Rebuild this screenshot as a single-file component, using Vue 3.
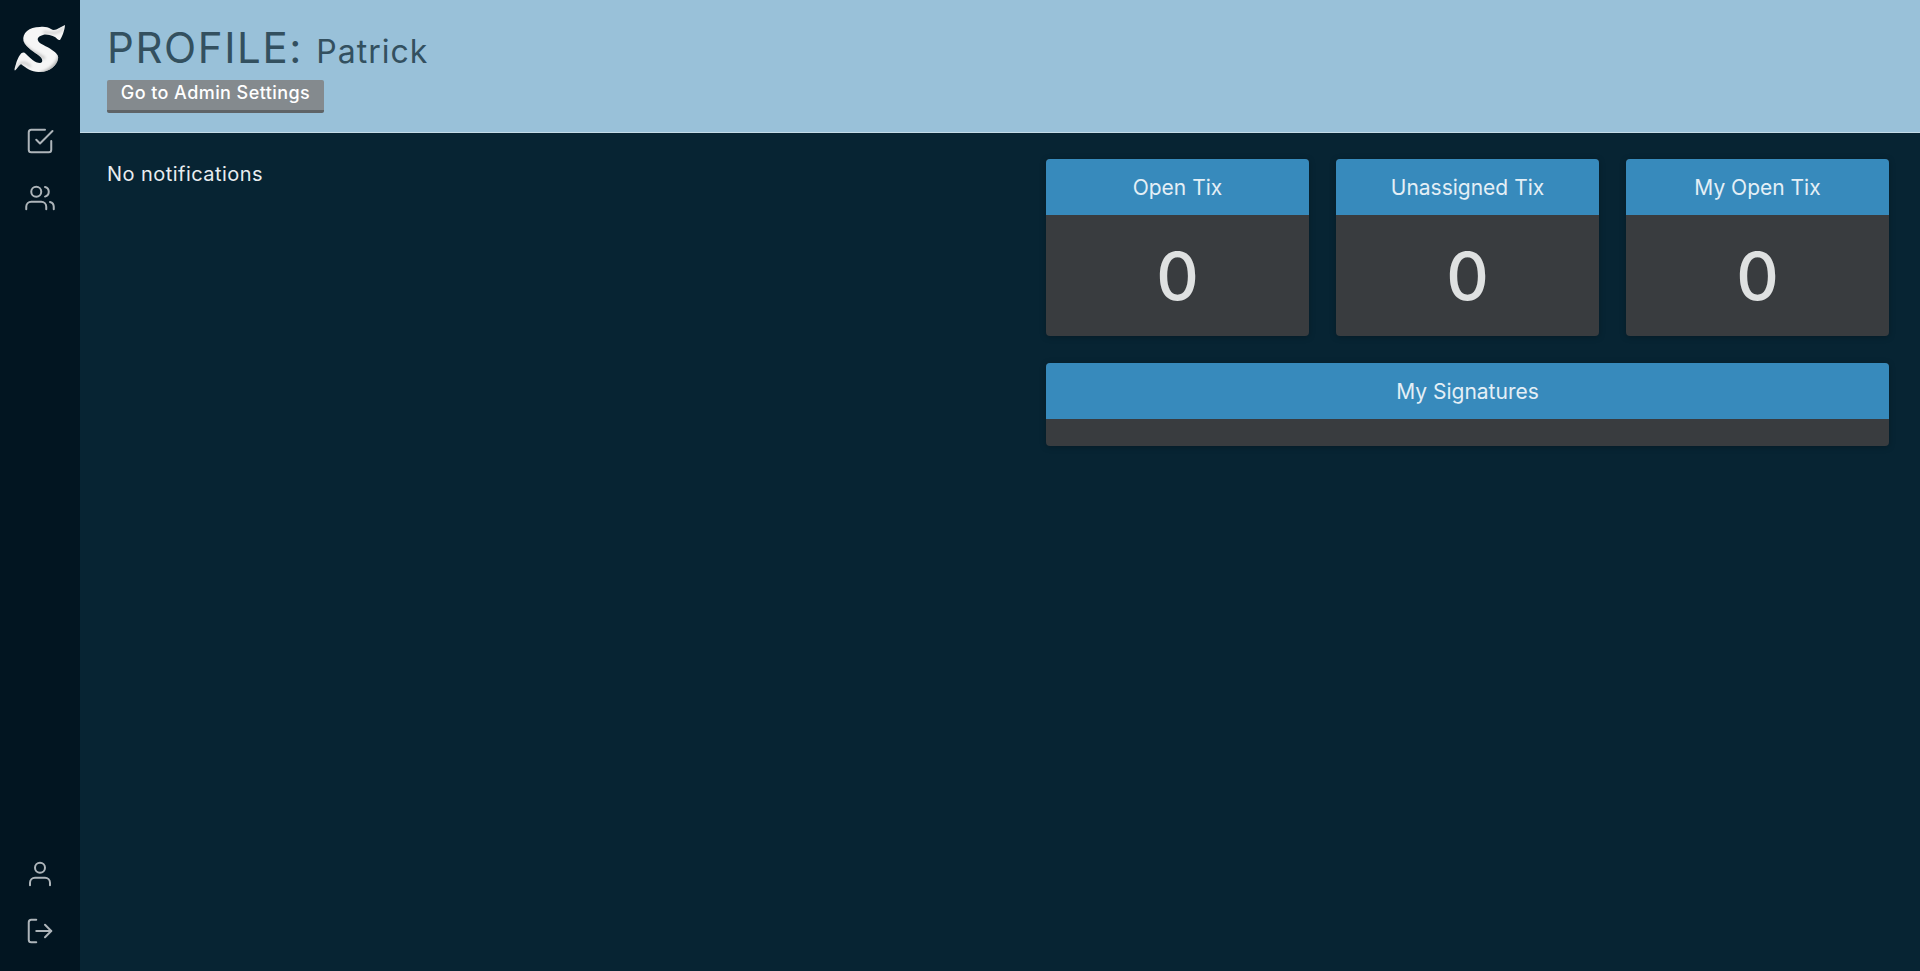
<script setup>
const stats = [
  { title: 'Open Tix', value: 0 },
  { title: 'Unassigned Tix', value: 0 },
  { title: 'My Open Tix', value: 0 },
]
const logoPath = 'M65 25C64.500 31 62 37 60 40C58 40.500 57 38.500 55 37C51 35 46 34 43 35C39 36 37 38 38 40.500C39 44 47 46 52 50C56 53 59 55 58 59C57 65 50 72 40 72C32 72.500 26 68 21 64C19 65 17 69 15 70.500C14 70 15 67 16 64C17 60 19 56 20 55C22 52 24 52 26 54C30 58 35 63 40 63C43 63 43 59 40 56.500C35 52 26 48 23.500 41C22 33 29 27 40 27C44 26.500 48 27 51 29C55 32 60 27 65 25Z'
</script>

<template>
  <div class="app">
    <aside class="sidebar">
      <div class="logo">
        <svg width="80" height="80" viewBox="0 0 80 80">
          <defs>
            <clipPath id="sclip"><path :d="logoPath" /></clipPath>
            <filter id="sblur" x="-20%" y="-20%" width="140%" height="140%"><feGaussianBlur stdDeviation="1.600" /></filter>
          </defs>
          <path fill="#f6f6f6" :d="logoPath" />
          <g clip-path="url(#sclip)" filter="url(#sblur)" fill="none" stroke-linecap="round">
            <path stroke="#a9a9a9" stroke-width="3" d="M60 50C61 60 54 70 40 74" />
            <path stroke="#bdbdbd" stroke-width="2.500" d="M22 42C26 50 36 53 44 58" />
            <path stroke="#c4c4c4" stroke-width="2" d="M44 32C50 33 58 35 63 28" />
            <path stroke="#bdbdbd" stroke-width="2" d="M17 68C20 62 24 61 30 66" />
          </g>
        </svg>
      </div>
      <nav class="nav">
        <svg class="ico" viewBox="0 0 24 24"><path d="M9 11l3 3L22 4" /><path d="M21 12v7a2 2 0 0 1-2 2H5a2 2 0 0 1-2-2V5a2 2 0 0 1 2-2h11" /></svg>
        <svg class="ico" viewBox="0 0 24 24"><path d="M17 21v-2a4 4 0 0 0-4-4H5a4 4 0 0 0-4 4v2" /><circle cx="9" cy="7" r="4" /><path d="M23 21v-2a4 4 0 0 0-3-3.870" /><path d="M16 3.130a4 4 0 0 1 0 7.750" /></svg>
      </nav>
      <nav class="nav bottom">
        <svg class="ico" viewBox="0 0 24 24"><path d="M20 21v-2a4 4 0 0 0-4-4H8a4 4 0 0 0-4 4v2" /><circle cx="12" cy="7" r="4" /></svg>
        <svg class="ico" viewBox="0 0 24 24"><path d="M9 21H5a2 2 0 0 1-2-2V5a2 2 0 0 1 2-2h4" /><path d="M16 17l5-5-5-5" /><path d="M21 12H9" /></svg>
      </nav>
    </aside>
    <div class="main">
      <header class="header">
        <h1 class="title">PROFILE: <small>Patrick</small></h1>
        <button class="btn" type="button">Go to Admin Settings</button>
      </header>
      <div class="content">
        <section class="left">No notifications</section>
        <section class="right">
          <div class="stats">
            <article v-for="s in stats" :key="s.title" class="card">
              <div class="card-head">{{ s.title }}</div>
              <div class="card-value">{{ s.value }}</div>
            </article>
          </div>
          <article class="card">
            <div class="card-head">My Signatures</div>
            <div class="card-empty"></div>
          </article>
        </section>
      </div>
    </div>
  </div>
</template>

<style>
html, body { margin: 0; background: #072433; }
</style>

<style scoped>
.app {
  display: flex;
  height: 971px;
  overflow: hidden;
  background: #072433;
  font-family: Inter, "Liberation Sans", sans-serif;
  color: #e8edf0;
}
.sidebar {
  width: 80px;
  flex: none;
  display: flex;
  flex-direction: column;
  background: #021521;
}
.logo {
  height: 98px;
  flex: none;
}
.nav {
  display: flex;
  flex-direction: column;
  align-items: center;
  gap: 27px;
  padding-top: 28px;
}
.nav.bottom {
  margin-top: auto;
  padding-top: 0;
  padding-bottom: 25px;
}
.ico {
  width: 30px;
  height: 30px;
  fill: none;
  stroke: #aeb5ba;
  stroke-width: 1.600;
  stroke-linecap: round;
  stroke-linejoin: round;
}
.main {
  flex: 1;
  min-width: 0;
}
.header {
  height: 133px;
  box-sizing: border-box;
  padding: 23px 27px 0;
  background: #99c1d9;
  border-bottom: 1px solid #c5dbe8;
  color: #33505f;
}
.title {
  margin: 0;
  font: 400 42px/49px Inter, sans-serif;
  letter-spacing: 1.600px;
}
.title small {
  font-size: 32px;
  letter-spacing: 1px;
}
.btn {
  display: block;
  margin-top: 4px;
  width: 217px;
  height: 33px;
  padding: 0 0 5px;
  border: 0;
  border-bottom: 3px solid #5f6467;
  border-radius: 2px;
  background: #848a8e;
  color: #fff;
  font: 500 18px/26px Inter, sans-serif;
  letter-spacing: 0.430px;
}
.content {
  display: grid;
  grid-template-columns: 1fr 843px;
  gap: 27px;
  padding: 26px 31px 0 27px;
}
.left {
  font: 400 20px/30px Inter, sans-serif;
  letter-spacing: 0.450px;
}
.right {
  display: flex;
  flex-direction: column;
  gap: 27px;
}
.stats {
  display: grid;
  grid-template-columns: repeat(3, 1fr);
  gap: 27px;
}
.card {
  border-radius: 4px;
  overflow: hidden;
  background: #393c3f;
  box-shadow: 0 1px 6px rgba(0, 0, 0, 0.25);
}
.card-head {
  height: 56px;
  display: flex;
  align-items: center;
  justify-content: center;
  background: #378abc;
  color: #e4eff6;
  font: 400 21px/1 Inter, sans-serif;
}
.card-value {
  height: 121px;
  display: flex;
  align-items: center;
  justify-content: center;
  color: #dfe1e1;
  font: 500 66px/1 Inter, sans-serif;
}
.card-empty {
  height: 27px;
}
</style>
